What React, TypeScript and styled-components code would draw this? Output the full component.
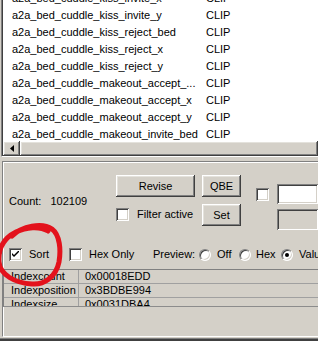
import styled, { createGlobalStyle } from "styled-components";

const GlobalStyle = createGlobalStyle`
	html, body {
		margin: 0;
		padding: 0;
		background: #d4d0c8;
	}
	body {
		font-family: "Liberation Sans", Arial, sans-serif;
		font-size: 11px;
		color: #000;
	}
`;

const Window = styled.div`
	position: relative;
	width: 318px;
	height: 341px;
	overflow: hidden;
	background: #d4d0c8;
	display: flex;
	flex-direction: column;
`;

const ListFrame = styled.div`
	margin-left: 1px;
	height: 157px;
	box-sizing: border-box;
	border-left: 1px solid #808080;
	border-bottom: 1px solid #ffffff;
	display: flex;
	flex-direction: column;
`;

const ListBody = styled.div`
	flex: 1;
	display: flex;
	flex-direction: column;
	border-left: 1px solid #404040;
	background: #ffffff;
`;

const Rows = styled.div`
	height: 141px;
	overflow: hidden;
`;

const RowsInner = styled.div`
	margin-top: -10px;
`;

const Row = styled.div`
	display: grid;
	grid-template-columns: 194px 1fr;
	height: 17px;
	line-height: 17px;
	padding-left: 9px;
	white-space: nowrap;
`;

const raised = `
	background: #d4d0c8;
	box-shadow: inset -1px -1px 0 #404040, inset 1px 1px 0 #ffffff, inset -2px -2px 0 #808080,
		inset 2px 2px 0 #e4e2dc;
`;

const sunken = `
	box-shadow: inset 1px 1px 0 #808080, inset -1px -1px 0 #ffffff, inset 2px 2px 0 #404040,
		inset -2px -2px 0 #d4d0c8;
`;

const ScrollBar = styled.div`
	height: 15px;
	display: flex;
	background: #e8e6e1;
`;

const ScrollButton = styled.div`
	${raised}
	width: 17px;
	display: flex;
	align-items: center;
	justify-content: center;
`;

const Thumb = styled.div`
	${raised}
	flex: 1;
`;

const Panel = styled.div`
	margin: 4px 0 0 2px;
	height: 176px;
	box-sizing: border-box;
	border-top: 1px solid #808080;
	border-left: 1px solid #808080;
	border-bottom: 1px solid #ffffff;
	box-shadow: inset 1px 1px 0 #ffffff;
	display: flex;
	flex-direction: column;
`;

const WindowEdge = styled.div`
	flex: 1;
	border-top: 1px solid #d4d0c8;
	border-bottom: 2px solid #404040;
	background: #808080;
`;

const Controls = styled.div`
	margin-top: 13px;
	display: grid;
	grid-template-columns: 113px 86px 54px 21px 1fr;
	grid-template-rows: 29px 26px;
`;

const CountBox = styled.div`
	grid-row: 1 / span 2;
	margin-top: 20px;
	padding-left: 6px;
	line-height: 13px;
	display: flex;
`;

const CountValue = styled.span`
	margin-left: 9px;
`;

const Button = styled.div<{ $w: number }>`
	${raised}
	width: ${(p) => p.$w}px;
	height: 22px;
	display: flex;
	align-items: center;
	justify-content: center;
	box-sizing: border-box;
	padding-bottom: 1px;
`;

const CheckField = styled.div<{ $top: number }>`
	margin-top: ${(p) => p.$top}px;
	display: flex;
	align-items: center;
	height: 13px;
`;

const Box = styled.span`
	${sunken}
	width: 13px;
	height: 13px;
	flex: 0 0 13px;
	background: #ffffff;
	display: flex;
	align-items: center;
	justify-content: center;
`;

const Label = styled.span<{ $gap: number }>`
	margin-left: ${(p) => p.$gap}px;
	line-height: 13px;
	white-space: nowrap;
`;

const Edit = styled.div<{ $top: number; $h: number; $disabled?: boolean }>`
	${sunken}
	margin-top: ${(p) => p.$top}px;
	height: ${(p) => p.$h}px;
	background: ${(p) => (p.$disabled ? "#d4d0c8" : "#ffffff")};
`;

const Options = styled.div`
	margin-top: 18px;
	height: 13px;
	padding-left: 6px;
	display: flex;
	align-items: center;
`;

const Option = styled.div<{ $w: number }>`
	width: ${(p) => p.$w}px;
	flex: 0 0 auto;
	display: flex;
	align-items: center;
	white-space: nowrap;
`;

const Radio = styled.span`
	width: 12px;
	height: 12px;
	flex: 0 0 12px;
	box-sizing: border-box;
	border-radius: 50%;
	border: 1px solid;
	border-color: #808080 #ffffff #ffffff #808080;
	box-shadow: inset 1px 1px 0 #404040, inset -1px -1px 0 #d4d0c8;
	background: #ffffff;
	display: flex;
	align-items: center;
	justify-content: center;
`;

const Dot = styled.span`
	width: 4px;
	height: 4px;
	border-radius: 50%;
	background: #000;
`;

const PropGrid = styled.div`
	margin-top: 8px;
	height: 38px;
	box-sizing: border-box;
	overflow: hidden;
	border-top: 1px solid #808080;
	border-left: 1px solid #808080;
	border-bottom: 1px solid #8c8c8c;
`;

const PropRow = styled.div`
	display: grid;
	grid-template-columns: 75px 1fr;
	height: 14px;
	box-sizing: border-box;
	border-bottom: 1px solid #a0a0a0;
	line-height: 13px;
`;

const PropName = styled.div`
	padding-left: 7px;
	border-right: 1px solid #a0a0a0;
	white-space: nowrap;
	overflow: hidden;
`;

const PropValue = styled.div`
	padding-left: 6px;
	white-space: nowrap;
`;

const Marker = styled.svg`
	position: absolute;
	left: 0;
	top: 0;
	pointer-events: none;
`;

const rows = [
	"a2a_bed_cuddle_kiss_invite_x",
	"a2a_bed_cuddle_kiss_invite_y",
	"a2a_bed_cuddle_kiss_reject_bed",
	"a2a_bed_cuddle_kiss_reject_x",
	"a2a_bed_cuddle_kiss_reject_y",
	"a2a_bed_cuddle_makeout_accept_...",
	"a2a_bed_cuddle_makeout_accept_x",
	"a2a_bed_cuddle_makeout_accept_y",
	"a2a_bed_cuddle_makeout_invite_bed",
];

const props = [
	["Indexcount", "0x00018EDD"],
	["Indexposition", "0x3BDBE994"],
	["Indexsize", "0x0031DBA4"],
];

function Check({ checked }: { checked?: boolean }) {
	return (
		<Box>
			{checked && (
				<svg width="7" height="7" viewBox="0 0 7 7">
					<path d="M0 2 L0 4 L2 6 L7 1 L7 -1 L2 4 Z" fill="#000" />
				</svg>
			)}
		</Box>
	);
}

function App() {
	return (
		<Window>
			<GlobalStyle />
			<ListFrame>
				<ListBody>
					<Rows>
						<RowsInner>
							{rows.map((name) => (
								<Row key={name}>
									<span>{name}</span>
									<span>CLIP</span>
								</Row>
							))}
						</RowsInner>
					</Rows>
					<ScrollBar>
						<ScrollButton>
							<svg width="4" height="7" viewBox="0 0 4 7">
								<path d="M4 0 L0 3.5 L4 7 Z" fill="#000" />
							</svg>
						</ScrollButton>
						<Thumb />
					</ScrollBar>
				</ListBody>
			</ListFrame>

			<Panel>
				<Controls>
					<CountBox>
						<span>Count:</span>
						<CountValue>102109</CountValue>
					</CountBox>
					<Button $w={79}>Revise</Button>
					<Button $w={39}>QBE</Button>
					<CheckField $top={13}>
						<Check />
					</CheckField>
					<Edit $top={9} $h={20} />
					<CheckField $top={4}>
						<Check />
						<Label $gap={8}>Filter active</Label>
					</CheckField>
					<Button $w={39}>Set</Button>
					<div />
					<Edit $top={5} $h={21} $disabled />
				</Controls>

				<Options>
					<Option $w={60}>
						<Check checked />
						<Label $gap={7}>Sort</Label>
					</Option>
					<Option $w={84}>
						<Check />
						<Label $gap={7}>Hex Only</Label>
					</Option>
					<Option $w={46}>
						<Label $gap={0}>Preview:</Label>
					</Option>
					<Option $w={40}>
						<Radio />
						<Label $gap={6}>Off</Label>
					</Option>
					<Option $w={42}>
						<Radio />
						<Label $gap={5}>Hex</Label>
					</Option>
					<Option $w={60}>
						<Radio>
							<Dot />
						</Radio>
						<Label $gap={6}>Value</Label>
					</Option>
				</Options>

				<PropGrid>
					{props.map(([name, value]) => (
						<PropRow key={name}>
							<PropName>{name}</PropName>
							<PropValue>{value}</PropValue>
						</PropRow>
					))}
				</PropGrid>
			</Panel>
			<WindowEdge />

			<Marker width="318" height="341" viewBox="0 0 318 341">
				<path
					d="M12 236 C22 226 42 222 52 229 C60 235 61 250 59 262 C56 277 44 285 32 284 C15 283 0 275 -1 262 C-2 248 4 238 16 232 C26 227 40 226 48 231"
					fill="none"
					stroke="#e3121c"
					strokeWidth="5"
					strokeLinecap="round"
				/>
			</Marker>
		</Window>
	);
}

export default App;
